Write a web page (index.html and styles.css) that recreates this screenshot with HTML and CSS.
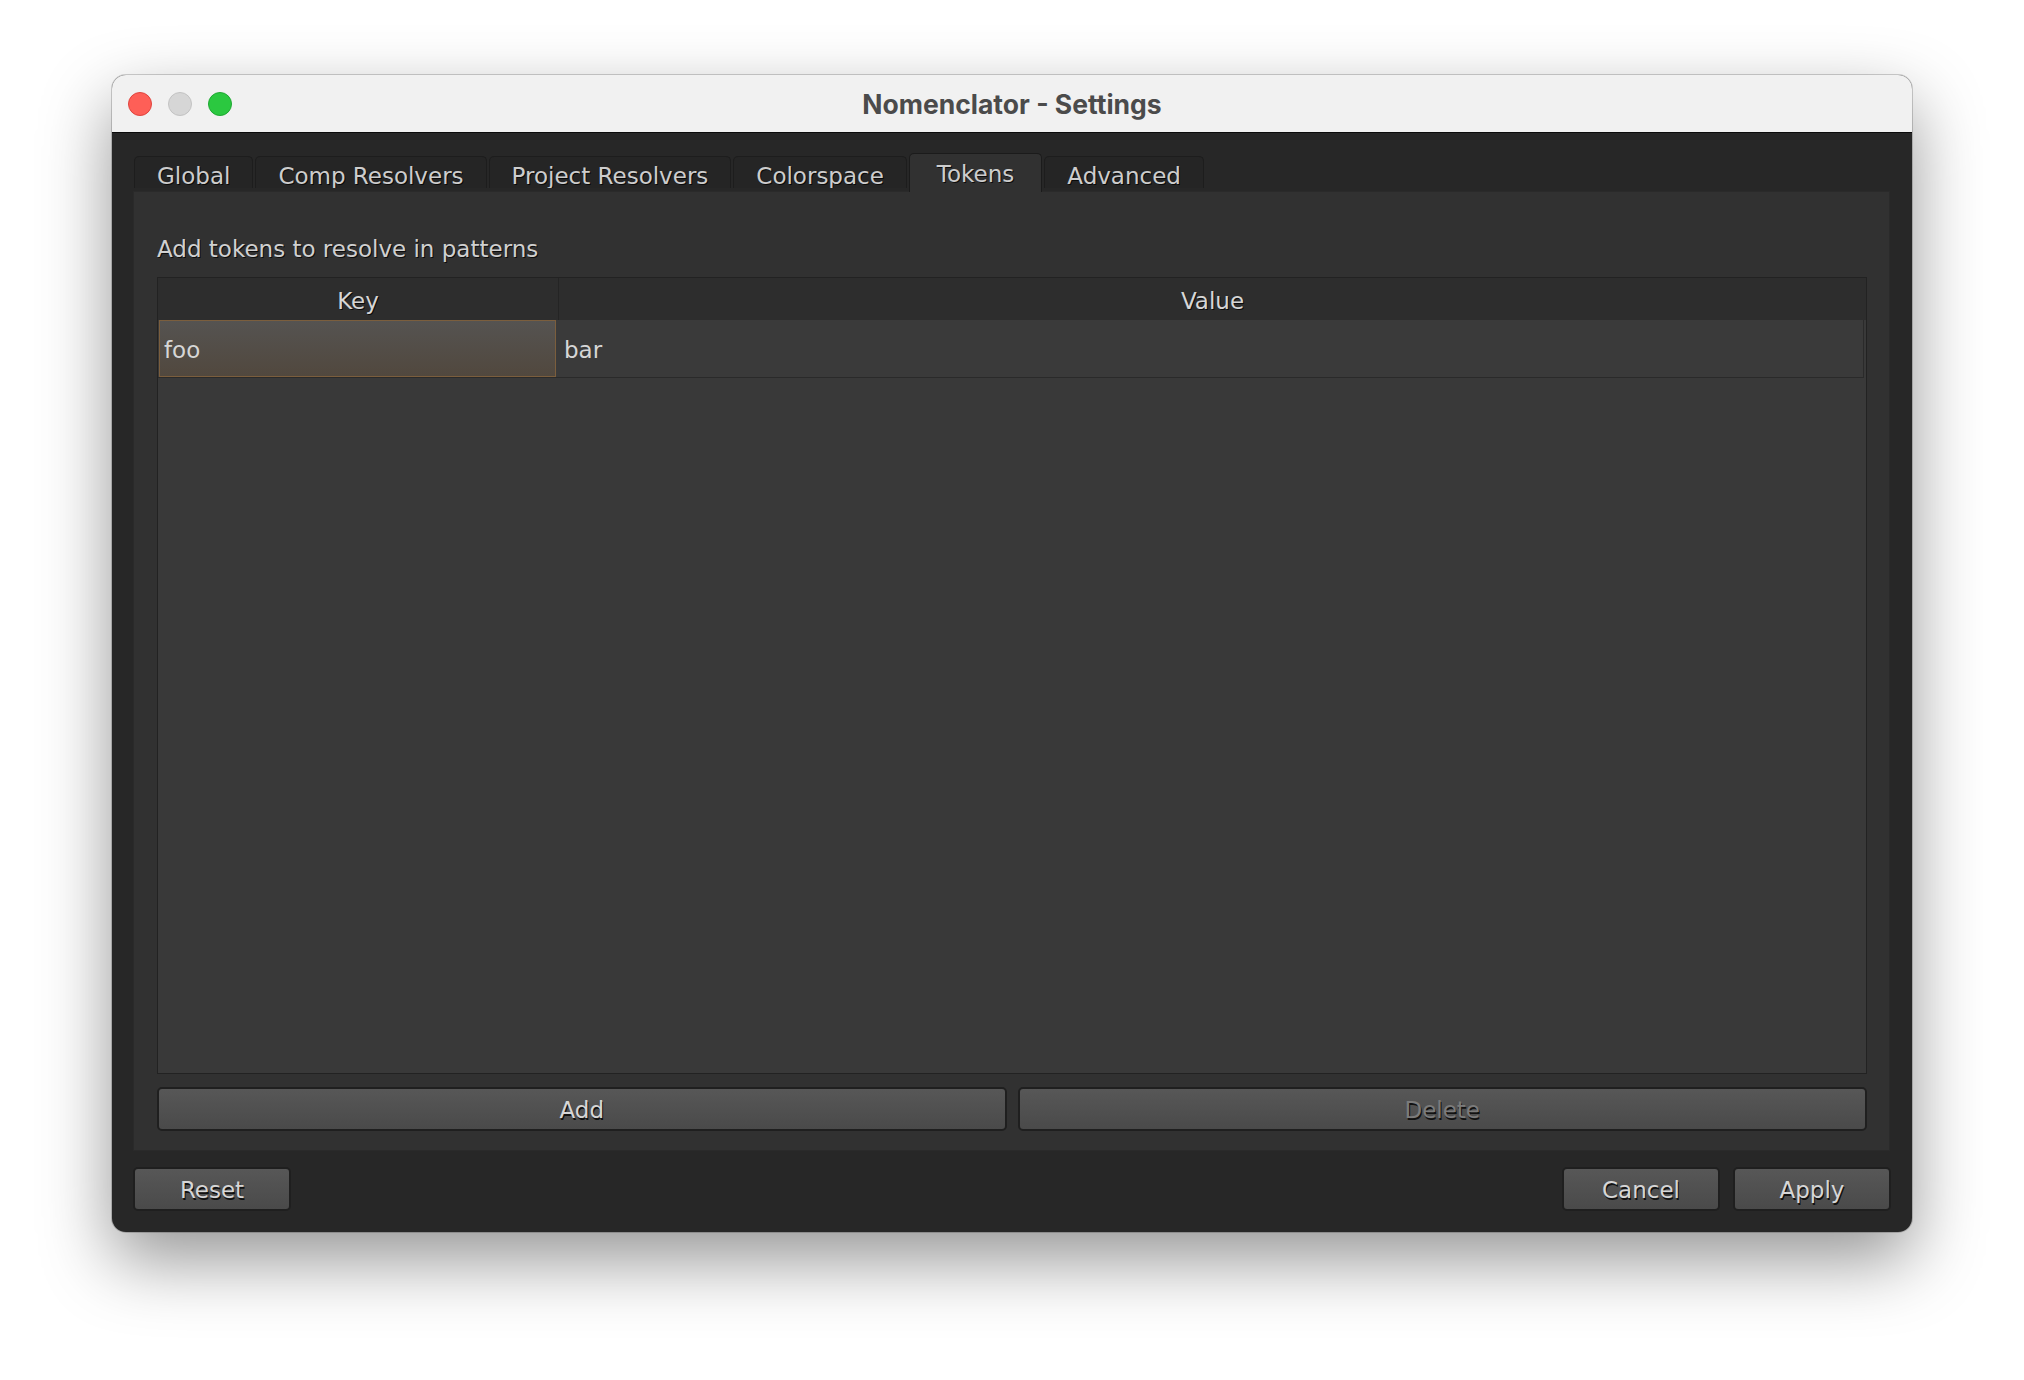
FILE: index.html
```html
<!DOCTYPE html>
<html lang="en">
    <head>
        <meta charset="UTF-8" />
        <meta name="viewport" content="width=device-width, initial-scale=1.0" />
        <title>Nomenclator - Settings</title>
        <link rel="stylesheet" href="styles.css">
    </head>

    <body>
        <div class="window">
            <div class="titlebar">
                <div class="lights">
                    <span class="light close"></span>
                    <span class="light minimize"></span>
                    <span class="light zoom"></span>
                </div>
                <div class="title">Nomenclator - Settings</div>
                <div></div>
            </div>

            <div class="window-body">
                <div class="tabs">
                    <div class="tab">Global</div>
                    <div class="tab">Comp Resolvers</div>
                    <div class="tab">Project Resolvers</div>
                    <div class="tab">Colorspace</div>
                    <div class="tab active">Tokens</div>
                    <div class="tab">Advanced</div>
                </div>

                <div class="pane">
                    <p class="hint">Add tokens to resolve in patterns</p>

                    <div class="table">
                        <div class="table-head">
                            <div class="head-cell key-col">Key</div>
                            <div class="head-cell">Value</div>
                        </div>
                        <div class="table-row">
                            <div class="cell key-col selected">foo</div>
                            <div class="cell">bar</div>
                        </div>
                    </div>

                    <div class="table-actions">
                        <button class="btn">Add</button>
                        <button class="btn" disabled>Delete</button>
                    </div>
                </div>

                <div class="footer">
                    <button class="btn small">Reset</button>
                    <div class="footer-right">
                        <button class="btn small">Cancel</button>
                        <button class="btn small">Apply</button>
                    </div>
                </div>
            </div>
        </div>
    </body>
</html>
```

FILE: styles.css
```css
body {
    margin: 0;
    min-height: 1380px;
    background: #ffffff;
    font-family: 'DejaVu Sans', Verdana, sans-serif;
    font-size: 23px;
    color: #d2d2d2;
}

.window {
    margin: 75px 0 0 112px;
    width: 1800px;
    height: 1157px;
    border-radius: 14px;
    overflow: hidden;
    display: flex;
    flex-direction: column;
    background: #272727;
    box-shadow: 0 0 0 1px rgba(0, 0, 0, 0.18), 0 28px 70px rgba(0, 0, 0, 0.42);
}

/* mac title bar */
.titlebar {
    height: 57px;
    flex: none;
    display: grid;
    grid-template-columns: 1fr auto 1fr;
    align-items: center;
    background: #f1f1f1;
    border-bottom: 1px solid #0b0b0b;
}

.lights {
    display: flex;
    gap: 16px;
    padding-left: 16px;
}

.light {
    width: 22px;
    height: 22px;
    border-radius: 50%;
    border: 1px solid;
}

.light.close { background: #fe5f57; border-color: #e0443e; }
.light.minimize { background: #d6d6d6; border-color: #c3c3c3; }
.light.zoom { background: #2bc840; border-color: #1fa832; }

.title {
    font-family: 'Inter', 'Liberation Sans', sans-serif;
    font-weight: 700;
    font-size: 26.5px;
    color: #4b4b4b;
}

.window-body {
    flex: 1;
    display: flex;
    flex-direction: column;
    padding: 20px 22px 21px 21px;
}

/* tab strip */
.tabs {
    display: flex;
    align-items: flex-end;
    gap: 2px;
    padding-left: 1px;
    height: 38px;
    flex: none;
}

.tab {
    height: 31px;
    line-height: 38px;
    overflow: hidden;
    padding: 0 22px;
    margin-bottom: 3px;
    background: #252525;
    border: 1px solid #1d1d1d;
    border-bottom: none;
    border-radius: 5px 5px 0 0;
    color: #cdcdcd;
    text-shadow: 1px 1px 0 rgba(0, 0, 0, 0.75);
}

.tab.active {
    height: 38px;
    line-height: 40px;
    margin-bottom: -1px;
    padding: 0 27px;
    background: #313131;
    border-color: #1b1b1b;
    position: relative;
    z-index: 1;
}

.pane {
    flex: 1;
    display: flex;
    flex-direction: column;
    padding: 44px 22px 19px 23px;
    background: #313131;
    border: 1px solid #2a2a2a;
}

.hint {
    margin: 0 0 15px;
    line-height: 26px;
    color: #d0d0d0;
    text-shadow: 1px 1px 0 rgba(0, 0, 0, 0.75);
}

/* tokens table */
.table {
    flex: 1;
    background: #393939;
    border: 1px solid #222222;
}

.table-head {
    display: flex;
    height: 42px;
    background: #2d2d2d;
}

.head-cell {
    flex: 1;
    line-height: 46px;
    text-align: center;
    color: #d6d6d6;
    text-shadow: 1px 1px 0 rgba(0, 0, 0, 0.75);
}

.head-cell.key-col {
    flex: none;
    width: 400px;
    border-right: 1px solid #242424;
}

.table-row {
    display: flex;
    height: 57px;
    margin-right: 2px;
    background: #3a3a3a;
    border-bottom: 1px solid #2a2a2a;
    border-right: 1px solid #2a2a2a;
}

.cell {
    flex: 1;
    line-height: 61px;
    padding-left: 6px;
    color: #d6d6d6;
}

.cell.key-col {
    flex: none;
    width: 397px;
    padding-left: 0;
    margin: 0 2px 0 1px;
}

.cell.selected {
    box-sizing: border-box;
    height: 57px;
    line-height: 59px;
    padding-left: 4px;
    border: 1px solid #7b5e3d;
    background: linear-gradient(#555351, #51483e);
}

.table-actions {
    display: flex;
    gap: 11px;
    margin-top: 13px;
}

.table-actions .btn {
    flex: 1;
}

.btn {
    height: 44px;
    padding: 2px 0 0;
    font-family: inherit;
    font-size: 23px;
    color: #d6d6d6;
    text-shadow: 1px 2px 0 rgba(0, 0, 0, 0.8);
    background: linear-gradient(#575757, #4a4a4a);
    border: 2px solid #1f1f1f;
    border-radius: 5px;
}

.btn:disabled {
    color: #7b7b7b;
}

.btn.small {
    width: 158px;
}

.footer {
    display: flex;
    justify-content: space-between;
    margin-top: 16px;
}

.footer-right {
    display: flex;
    gap: 13px;
    margin-right: -1px;
}
```
